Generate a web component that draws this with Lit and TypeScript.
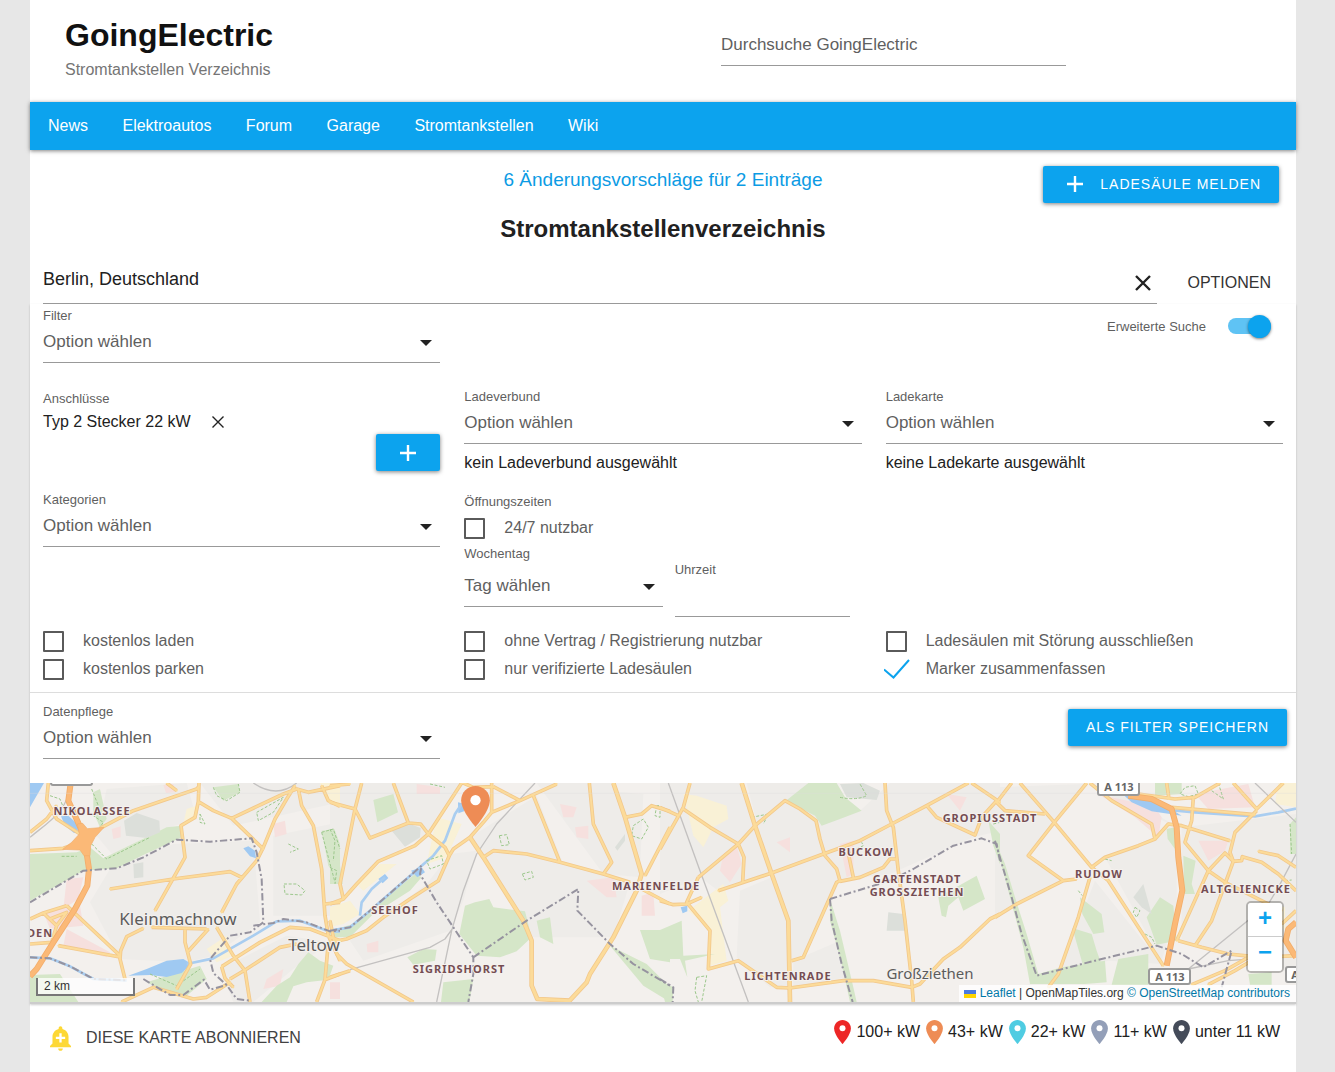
import { LitElement, html, svg, css } from "lit";
import { customElement, property } from "lit/decorators.js";

/* Map geometry. Each sheet has its own origin; three units make one CSS pixel. */
interface Sheet {
  x: number;
  y: number;
  built: string;
  green: string;
  dull: string;
  yellow: string;
  pink: string;
  water: string;
  river: string;
  road: string;
  main: string;
  motorway: string;
  rail: string;
  border: string;
  path: string;
}

const SHEETS: Sheet[] = [
  {
    x: 0, y: -15,
    built: "M270 400L330 300 520 225 760 215 780 460 640 560 560 580 360 570ZM320 60L560 42 590 150 460 190 340 260 290 200ZM820 200L1020 160 1020 440 820 440ZM600 42H1020V100L700 170ZM660 600L860 500 990 520 880 600 760 699H700Z",
    green: "M90 255L230 250 270 235 310 268 500 175 545 170 545 205 430 258 350 298 250 305 90 395ZM965 185L1003 180 1020 225V340L985 290ZM895 585L925 550 960 575 1000 590 985 632 920 640 880 652 860 699H785L830 650 870 625ZM90 618L180 615 235 699H90ZM280 70L300 60 320 150 300 175 280 130ZM640 55L715 45 720 70 670 95ZM440 640L600 590 620 630 560 680 500 670Z",
    dull: "M372 155L410 132 478 155 480 190 440 207 378 200ZM400 285L430 280 430 325 402 328Z",
    yellow: "M960 42H1020V110L980 95ZM620 540L680 500 700 560 650 580ZM560 120L590 110 580 150 550 165Z",
    pink: "M335 180L362 172 362 205 340 210ZM820 165L855 155 860 195 825 205ZM490 48L520 45 525 70 498 72ZM130 430L240 410 250 470 150 480ZM200 480L330 550 320 565 190 530ZM200 330L250 325 235 390 190 420ZM800 630L850 600 840 650 790 660ZM990 640H1020V690H990Z",
    water: "M90 42H132L90 115ZM183 142L205 140 232 165 240 188 222 192 195 170ZM385 620L440 600 500 575 550 570 575 585 545 612 500 624 450 618ZM730 238L745 232 765 245 768 268 750 262Z",
    river: "M560 585L640 568 760 500 830 457 900 455 990 488 1020 487M90 565L150 568 210 592 280 630 380 634",
    road: "M90 190L140 150 170 110M145 42L140 95 170 150 240 195M90 245L190 238 240 220M300 178L400 125 590 60 597 52M500 42L530 65M597 42L595 98 585 145 543 170 555 265 465 425M595 98L640 125 695 148 790 240M695 148L850 75 890 60 925 70 1020 50M885 50L860 90 825 150 790 235 770 275 710 345 665 430M650 475L700 560 735 605 750 699M895 60L905 110 940 170 965 300 975 440 985 500 1020 575M330 360L520 330 690 308 725 325M455 475L620 480M430 478L380 503 362 545 360 570 375 630M200 410L360 560M175 530L360 564M555 480L555 520 572 585 530 660M625 480L562 550M665 593L780 520 870 475 930 480 1020 515M665 593L675 628 700 655M690 630L740 600 840 535 890 525M365 699L460 655 580 690 620 685 690 640M90 450L130 432 200 410M90 525L155 520M130 432L170 470 155 520M150 450L200 430 170 470M950 699L975 632 985 520M975 632L1020 615M975 405L1020 400M965 50L985 95 1020 112",
    main: "",
    motorway: "M212 42L205 95 225 140 250 195 258 240 267 300 262 350 225 420 160 520 110 600 90 622",
    rail: "M90 205C150 155 200 130 215 42M760 42Q830 90 890 42",
    border: "M90 400L250 305 350 298 430 265 530 212 630 218 755 208 770 250 785 330 790 460 750 490 690 500 630 570 640 612 680 648 710 690 750 695M90 565L150 568 210 592 280 630 380 634M430 630L510 678 550 678 612 632 630 662 680 648M760 470L820 462 850 450 920 460 990 487 1020 485",
    path: "M275 225L320 270 450 205M185 262H230M150 80L180 90 200 140M275 60L295 110 280 140 310 160 290 190M640 55L650 80 680 95 720 70 715 45M770 130L850 85 820 130 775 155ZM965 190L1000 180 1020 240M965 190L1005 340M852 345L890 345 915 365 905 378 855 375ZM865 225L895 240 870 250M600 135L615 165 600 160ZM450 615L530 650 600 600",
  },
  {
    x: 990, y: 0,
    built: "M0 27H395L295 180 140 265 40 375 0 390ZM420 190L620 65 700 270 900 325 850 490 600 490 460 250ZM620 27H850L935 310 820 300ZM290 330L360 240 440 230 400 380 360 470 100 560 60 500ZM690 40L940 60 930 290Z",
    green: "M130 78L190 60 204 115 142 145ZM405 395L435 385 478 375 490 400 585 412 605 490 560 532 510 550 440 545 388 480ZM930 468H1020V565L960 555ZM340 625L430 615 418 684H333ZM232 550L280 525 320 527 315 560 250 572ZM0 165L25 240 38 330 0 330ZM840 515L950 570 1020 640V684L940 635ZM70 450L255 300 275 310 240 350 130 420 60 490H0V470ZM620 440L660 430 670 510 630 490Z",
    dull: "M185 170L240 150 272 162 270 190 225 218ZM855 220L885 180 885 200 862 230Z",
    yellow: "M320 130L395 150 350 250 290 270ZM0 400L60 380 90 420 40 450 0 460ZM80 330L150 270 200 270 100 350Z",
    pink: "M935 365L970 355 975 425 935 425ZM735 160L775 155 775 195 740 190ZM690 90L740 100 730 130 700 130ZM110 510L145 500 145 535 112 535ZM260 30L330 40 330 60 260 60ZM770 320L850 310 860 370 830 370Z",
    water: "M384 85L405 90 402 112 385 118ZM145 315L165 300 175 312 158 328ZM243 290L275 280 285 295 262 310Z",
    river: "M395 90L375 120 345 200 310 245 275 275 120 410 60 460 0 470M90 425L95 385 125 345 165 310",
    road: "M0 35L60 30M95 27L75 105 30 330 40 375M0 85L75 105 120 192 235 147 190 27M235 147L272 150 295 180 345 220 358 245M395 27L295 180 255 215 145 262 80 330 40 375 0 390M358 245L370 225 420 190 460 145 485 115 570 80 680 30M485 27V115M490 38L570 80M358 245L325 320 240 375 160 430 110 470 50 495 0 505M460 250L490 230 590 240 690 265 820 300 900 325M610 65L690 265M778 27L790 150 845 265 820 300M885 130L935 120 965 95 1020 112M1020 160L945 305M935 345L1020 390M0 440L20 540 50 570 250 684M0 610L60 590M400 27L430 40 490 38",
    main: "M420 190L460 250 580 440 605 500 605 635 622 675 720 680M850 27L885 130 935 300 920 350 850 490 780 600 770 625 715 684",
    motorway: "",
    rail: "M615 27L500 150 440 240 400 350 365 470 320 684M60 587L300 520 345 495 370 460",
    border: "M0 470L60 460 120 410 275 275 270 300 320 385 430 550 430 600 415 684M430 550L590 440 745 345 742 410 840 510 910 570 1020 635",
    path: "M0 165L15 200 10 260M0 280L20 290 15 330M290 260L335 245 340 270 300 285ZM508 185L530 182 538 212 515 215ZM577 300L605 292 610 310 585 318ZM910 155L940 135 955 160 935 195 905 185ZM980 95L975 125 990 130 990 95ZM300 30L345 40",
  },
  {
    x: 1980, y: 0,
    built: "M0 27H240L330 300 175 350 120 310 0 360ZM260 27L440 27 600 110 690 27H1020V170L940 190 690 300 540 320 430 550 395 560ZM240 350L335 310 385 440 390 640 330 640 230 550ZM400 560L540 500 560 610 400 640Z",
    green: "M445 27H530L555 70 605 110 540 135 485 155 465 125 378 80ZM835 370L950 305 975 375 910 410 895 370 865 395 858 430 845 425ZM0 468L65 440 70 545 165 540 75 560 82 610 60 555H0ZM510 375L540 470 580 640 590 684H570L545 570 510 440ZM985 140L1020 180V270L1000 215ZM0 620L40 640 38 684H15Z",
    dull: "M540 30L610 27 660 50 650 78 560 70ZM685 415L730 420 735 470 680 470Z",
    yellow: "M70 60L110 65 200 95 205 135 160 160 130 220 100 185 85 120ZM85 410L190 330 205 380 180 400 200 560 150 575 155 470Z",
    pink: "M190 240L230 215 245 270 210 325 180 290ZM540 210L580 200 580 300 560 310ZM660 235L700 225 690 250ZM350 205L390 190 390 235ZM860 60L920 70 900 110Z",
    water: "M62 400L82 395 82 412 68 418Z",
    river: "",
    road: "M90 27L70 100 0 225M0 100L55 125M70 105L150 160 235 210 252 250 248 325M115 310L235 210 285 155 375 80 420 105 468 140 480 195 495 245 530 285 540 320 530 325 430 550 395 560M175 350L335 297 490 240 600 200 695 150 800 95 925 27M675 27L680 110 700 160 715 290 735 440 755 620 760 684M800 95L830 130 945 183 965 130 1010 80M935 27L1020 85M540 322L600 310 670 280 690 255 705 255M565 238L580 310M0 380L40 392 80 390 125 370M115 310L80 385 150 470 145 585 235 560 350 640 390 642 550 620 640 620 755 640 780 630 850 555 900 520 990 435 1020 420",
    main: "M245 27L285 155 335 300 385 440 390 684",
    motorway: "",
    rail: "M25 27L120 290 265 684",
    border: "M510 375L690 320 760 285 880 215 965 193 1010 210 1020 260M510 375L515 440 545 570 578 684M0 615L40 640 38 684",
    path: "M110 610L140 605 125 684M110 610L105 650 115 684M275 130L325 120 310 150M1000 150L1020 145M540 70Q590 80 620 65L600 30M565 238L610 215 605 205",
  },
  {
    x: 2985, y: 0,
    built: "M0 40L270 30 100 245 200 320 0 420ZM275 30L400 65 530 150 480 200 330 250 500 560 545 400 545 160ZM560 160L903 120V600L560 500ZM300 320L500 570 340 560 190 600Z",
    green: "M0 200L30 270 60 370 95 480 130 600 200 580 330 560 335 625 270 630H105L85 520ZM255 370L320 420 328 475 295 480 262 420ZM232 462L290 480 305 530 330 600 270 595ZM495 370L535 395 545 500 485 512 455 430ZM370 555L460 540V632H350ZM760 600L830 595V632H765ZM565 245L602 260 590 330 600 360 568 360ZM515 165L540 160V225L518 195ZM480 27H560V60L480 65ZM885 150L903 130V240L885 240Z",
    dull: "M415 370L445 330 470 420 440 400Z",
    yellow: "M850 27H903V100L840 90ZM800 380L870 400V470L800 400Z",
    pink: "M310 60L480 100 500 130 490 190 420 130ZM600 60L760 30 780 100 640 105ZM610 200L700 200 690 230 640 260Z",
    water: "M385 62L470 80 520 100 560 125 470 112 410 85Z",
    river: "M520 108L600 115 780 127 850 115 903 104",
    road: "M75 27L178 145 290 280 340 320 505 575M275 27L178 145 100 245 205 320 245 315M205 320L65 390 0 430M50 27L5 85 30 110 150 120M285 27L350 80 470 150 480 195 430 215 330 250 290 280M480 195L520 150 560 155 705 200M285 310L250 430 190 600 160 640M515 27L522 75M430 60L540 75 600 70 675 27M595 70L590 140 570 205 640 290 690 325 810 385 860 410M530 100L780 122M715 27L785 105 865 27M785 110L720 175 705 235 715 262 690 330 650 440 600 515M545 500L640 290 690 237 715 262 740 260 742 248 800 265 850 300 903 350M790 232L850 245 903 280M550 500L620 520 700 540 800 550 903 545M590 632L690 590 760 550M640 632L720 590 770 560M860 450L903 410",
    main: "",
    motorway: "M400 65L470 75 530 105 545 160 550 250 562 350 540 450 515 575M903 445L880 465 872 500 903 550",
    rail: "M780 27L903 145M903 240L850 340 820 390 580 585M580 585L700 560 903 545",
    border: "M0 200L50 370 80 480 125 605 300 560 485 515 560 540 625 580 710 530 680 640",
    path: "M555 60L570 40 600 35 610 60 580 68ZM650 50L685 75 670 27M885 150L890 240M450 480L470 490 480 510M420 400L435 410 425 430 415 415ZM250 350L262 365M330 255L350 260M870 320L890 318",
  },
];

const SUBURBS: [string, number, number][] = [
  ["NIKOLASSEE", 92, 816],
  ["SEEHOF", 395, 915],
  ["SIGRIDSHORST", 459, 974],
  ["MARIENFELDE", 656, 891],
  ["BUCKOW", 866, 857],
  ["GARTENSTADT", 917, 884],
  ["GROSSZIETHEN", 917, 897],
  ["GROPIUSSTADT", 990, 823],
  ["LICHTENRADE", 788, 981],
  ["RUDOW", 1099, 879],
  ["ALTGLIENICKE", 1246, 894],
  ["DEN", 40, 938],
];

const layer = (key: keyof Sheet, cls: string) =>
  svg`<g class=${cls}>${SHEETS.map(
    (s) => svg`<path transform="translate(${s.x} ${s.y})" d=${s[key] as string}></path>`
  )}</g>`;

const pin = (color: string, cls: string) => html`
  <svg class=${cls} viewBox="5 2 14 20" aria-hidden="true">
    <path fill=${color} d="M12 2C8.13 2 5 5.13 5 9c0 5.25 7 13 7 13s7-7.75 7-13c0-3.87-3.13-7-7-7z"></path>
    <circle cx="12" cy="8.9" r="2.5" fill="#fff"></circle>
  </svg>`;

const plusIcon = html`<svg class="plus" viewBox="0 0 18 18" aria-hidden="true"><path d="M9 1v16M1 9h16"></path></svg>`;

@customElement("city-map")
export class CityMap extends LitElement {
  static styles = css`
    :host { display: block; }
    .map { position: relative; height: 219px; overflow: hidden; border-bottom: 2px solid #ccc; }
    .canvas { display: block; width: 100%; height: 100%; }
    .built { fill: #eeece9; }
    .green { fill: #d5e6c8; }
    .dull { fill: #dcdfda; }
    .yellow { fill: #f9f1d6; }
    .pink { fill: #f6e0de; }
    .water { fill: #9fc9f2; }
    .river, .rail, .casing, .road, .border, .path, .maincase, .main, .mwcase, .mw { fill: none; stroke-linejoin: round; }
    .river { stroke: #a9cdf0; stroke-width: 8; }
    .rail { stroke: #c3c1c0; stroke-width: 4; }
    .path { stroke: #9cc78c; stroke-width: 3; stroke-dasharray: 9 5; }
    .casing { stroke: #f2c88c; stroke-width: 11; stroke-linecap: butt; }
    .road { stroke: #fcdb99; stroke-width: 6; stroke-linecap: round; }
    .maincase { stroke: #f2c88c; stroke-width: 14; }
    .main { stroke: #fcdb99; stroke-width: 9; }
    .mwcase { stroke: #f2ad6b; stroke-width: 18; }
    .mw { stroke: #fbb977; stroke-width: 13; }
    .junction { fill: #fbb977; stroke: #f2ad6b; stroke-width: 2; }
    .border { stroke: #96939f; stroke-width: 6; stroke-dasharray: 22 8 6 8; }
    .suburb, .town, .shield { text-anchor: middle; font-family: "Noto Sans", sans-serif; stroke: #f4f1ee; paint-order: stroke; }
    .suburb { font-size: 11px; font-weight: 700; letter-spacing: 1px; fill: #744d53; stroke-width: 2px; }
    .town { font-size: 17px; fill: #5c5c5c; stroke-width: 2px; }
    .village { font-size: 15px; }
    .plate { fill: #fff; stroke: #999; stroke-width: 2; }
    .shield { font-size: 11px; font-weight: 700; fill: #666; stroke: none; }
    .marker { position: absolute; left: 431px; top: 3px; width: 29px; height: 41px; }
    .scale {
      position: absolute; left: 6px; bottom: 6px; width: 95px; height: 16px;
      border: 2px solid #777; border-top: 0; background: rgba(255, 255, 255, 0.75);
      font-size: 12px; line-height: 16px; text-indent: 6px; color: #333;
    }
    .corner { position: absolute; right: 0; bottom: 0; display: flex; flex-direction: column; align-items: flex-end; gap: 12px; }
    .zoom { display: flex; flex-direction: column; margin-right: 12px; border: 2px solid rgba(0, 0, 0, 0.25); border-radius: 5px; background-clip: padding-box; overflow: hidden; }
    .zoom button {
      width: 34px; height: 34px; border: 0; padding: 0 0 4px; background: #fff; color: #0ca3ee;
      font: bold 24px/30px "Liberation Sans", Arial, sans-serif; cursor: pointer;
    }
    .zoom button:first-child { border-bottom: 1px solid #ccc; }
    .credit {
      display: flex; align-items: center; gap: 4px; height: 17px; padding: 0 6px 0 5px;
      background: rgba(255, 255, 255, 0.8); font-size: 12px; line-height: 17px; color: #333; white-space: nowrap;
    }
    .credit a { color: #0078a8; text-decoration: none; }
    .flag { width: 12px; height: 8px; }
  `;

  render() {
    return html`<div class="map">
      <svg class="canvas" viewBox="30 784 1266 219" preserveAspectRatio="xMidYMid slice" role="img" aria-label="Karte">
        <rect x="30" y="784" width="1266" height="219" fill="#f3f0ed"></rect>
        <g transform="translate(0 775) scale(0.33333)">
          ${layer("built", "built")} ${layer("yellow", "yellow")} ${layer("pink", "pink")}
          ${layer("green", "green")} ${layer("dull", "dull")} ${layer("water", "water")}
          ${layer("river", "river")} ${layer("path", "path")} ${layer("rail", "rail")}
          ${layer("road", "casing")} ${layer("main", "maincase")}
          ${layer("road", "road")} ${layer("main", "main")}
          ${layer("motorway", "mwcase")} ${layer("motorway", "mw")}
          <path class="junction" d="M188 226L215 205 238 180 232 150 248 148 262 164 312 160 285 190 272 215 270 245 252 245 240 228Z"></path>
          ${layer("border", "border")}
          <path d="M90 58H3888" stroke="#dddbd9" stroke-width="1"></path>
        </g>
        ${SUBURBS.map(([name, x, y]) => svg`<text class="suburb" x=${x} y=${y}>${name}</text>`)}
        <text class="town" x="178" y="926">Kleinmachnow</text>
        <text class="town" x="314" y="952">Teltow</text>
        <text class="town village" x="930" y="980">Großziethen</text>
        <rect class="plate" x="51" y="770" width="41" height="16" rx="2"></rect>
        <rect class="plate" x="1098" y="780" width="41" height="16" rx="2"></rect>
        <text class="shield" x="1119" y="792">A 113</text>
        <rect class="plate" x="1149" y="970" width="41" height="15" rx="2"></rect>
        <text class="shield" x="1170" y="982">A 113</text>
        <rect class="plate" x="1286" y="968" width="41" height="15" rx="2"></rect>
        <text class="shield" x="1306" y="980">A 113</text>
      </svg>
      ${pin("#ee8c55", "marker")}
      <div class="scale">2 km</div>
      <div class="corner">
        <div class="zoom">
          <button aria-label="Vergrößern">+</button>
          <button aria-label="Verkleinern">−</button>
        </div>
        <div class="credit">
          <svg class="flag" viewBox="0 0 12 8" aria-hidden="true"><path fill="#4c7be1" d="M0 0h12v4H0z"></path><path fill="#ffd500" d="M0 4h12v4H0z"></path></svg>
          <span><a href="#leaflet">Leaflet</a> | OpenMapTiles.org <a href="#osm">© OpenStreetMap contributors</a></span>
        </div>
      </div>
    </div>`;
  }
}

@customElement("pick-field")
export class PickField extends LitElement {
  @property() label = "";
  @property() value = "Option wählen";
  static styles = css`
    :host { display: block; }
    .field { display: flex; flex-direction: column; position: relative; }
    .label { font-size: 13px; line-height: 16px; color: #5f5f5f; }
    .select {
      appearance: none; width: 100%; height: 39px; margin: 0; padding: 0 32px 4px 0; border: 0; border-bottom: 1px solid #999;
      border-radius: 0; background: transparent; color: #5f5f5f; font: 17px "Liberation Sans", Arial, sans-serif;
    }
    :host([spaced]) .field { gap: 6px; }
    .arrow { position: absolute; right: 8px; bottom: 17px; width: 12px; height: 6px; fill: #222; pointer-events: none; }
  `;
  render() {
    return html`<div class="field">
      <label class="label" for="pick">${this.label}</label>
      <select class="select" id="pick"><option>${this.value}</option></select>
      <svg class="arrow" viewBox="0 0 12 6" aria-hidden="true"><path d="M0 0h12L6 6z"></path></svg>
    </div>`;
  }
}

@customElement("tick-box")
export class TickBox extends LitElement {
  @property() label = "";
  @property({ type: Boolean }) checked = false;
  static styles = css`
    :host { display: block; }
    .row { display: flex; align-items: center; gap: 19px; height: 28px; font-size: 16px; color: #5f5f5f; }
    .box { position: relative; display: flex; }
    .input { appearance: none; width: 21px; height: 21px; margin: 0; border: 2px solid #5a5a5a; border-radius: 1px; background: #fff; }
    .input:checked { border-color: transparent; }
    .check { display: none; position: absolute; left: -2px; top: 0; width: 26px; height: 20px; fill: none; stroke: #0ca3ee; stroke-width: 2; pointer-events: none; }
    .input:checked + .check { display: block; }
  `;
  render() {
    return html`<label class="row">
      <span class="box">
        <input class="input" type="checkbox" .checked=${this.checked} />
        <svg class="check" viewBox="0 0 26 20"><path d="M0 10.5 9.5 18.5 25 1"></path></svg>
      </span>
      ${this.label}
    </label>`;
  }
}

@customElement("app-root")
export class AppRoot extends LitElement {
  static styles = css`
    :host { display: block; min-height: 100vh; background: #e7e7e7; font-family: "Liberation Sans", Arial, sans-serif; color: #212121; }
    * { box-sizing: border-box; }
    button, input { font-family: inherit; }
    .sheet { margin: 0 39px 0 30px; min-height: 100vh; background: #fff; }
    .head { display: grid; grid-template-columns: 691fr 345fr 230fr; height: 102px; }
    .brand { padding: 16px 0 0 35px; }
    .title { margin: 0; font-size: 32px; line-height: 38px; color: #111; }
    .sub { margin: 6px 0 0; font-size: 16px; line-height: 20px; color: #757575; }
    .find { width: 100%; height: 42px; margin-top: 24px; padding: 0; border: 0; border-bottom: 1px solid #999; border-radius: 0; font-size: 17px; outline: 0; }
    .find::placeholder { color: #5f5f5f; opacity: 1; }
    .nav { position: relative; height: 48px; padding-left: 3px; background: #0ca3ee; box-shadow: 0 1px 4px rgba(0, 0, 0, 0.5); line-height: 48px; font-size: 16px; }
    .nav a { padding: 0 15px; color: #fff; text-decoration: none; }
    .intro { display: grid; grid-template-columns: 1fr auto 1fr; padding: 16px 17px 0; }
    .changes { grid-column: 2; font-size: 19px; line-height: 28px; color: #0c9be4; text-decoration: none; }
    .btn {
      display: flex; align-items: center; justify-content: center; gap: 16px; height: 37px; padding: 0 18px; border: 0; border-radius: 2px;
      background: #0ca3ee; color: #fff; font-size: 14px; letter-spacing: 1px; white-space: nowrap;
      box-shadow: 0 1px 4px rgba(0, 0, 0, 0.5); cursor: pointer;
    }
    .report, .save-btn { padding-bottom: 2px; }
    .report { justify-self: end; padding-left: 23px; }
    .plus { width: 18px; height: 18px; fill: none; stroke: #fff; stroke-width: 2.4; }
    .heading { margin: 10px 0 0; text-align: center; font-size: 24px; line-height: 32px; }
    .search { display: flex; gap: 30px; padding: 13px 25px 0 13px; }
    .place { flex: 1; display: flex; height: 46px; border-bottom: 1px solid #999; }
    .place input { flex: 1; min-width: 0; padding: 0 0 2px; border: 0; font-size: 18px; color: #212121; outline: 0; background: transparent; }
    .icon { display: flex; align-items: center; justify-content: center; padding: 0; border: 0; background: transparent; cursor: pointer; }
    .clear { width: 28px; padding-top: 5px; }
    .cross { fill: none; stroke: #222; }
    .cross.big { width: 16px; height: 16px; stroke-width: 2.4; }
    .cross.small { width: 12px; height: 12px; stroke-width: 1.4; }
    .text { padding: 4px 0 0; border: 0; background: transparent; font-size: 16px; color: #333; cursor: pointer; }
    .grid { display: grid; grid-template-columns: repeat(3, minmax(0, 1fr)); column-gap: 24px; padding: 0 13px; }
    .filter { padding-top: 4px; }
    .switch { grid-column: 3; display: flex; align-items: center; justify-content: flex-end; gap: 22px; height: 36px; padding-right: 12px; font-size: 13px; color: #5f5f5f; }
    .toggle { position: relative; display: flex; }
    .toggle input { appearance: none; width: 43px; height: 16px; margin: 0; border-radius: 8px; background: #5fc3f4; }
    .knob { position: absolute; right: 0; top: -3px; width: 23px; height: 23px; border-radius: 50%; background: #0ca3ee; box-shadow: 0 1px 3px rgba(0, 0, 0, 0.5); pointer-events: none; }
    .plugs { padding-top: 26px; }
    .small { font-size: 13px; line-height: 16px; color: #5f5f5f; }
    .connectors { padding-top: 2px; }
    .chip { display: flex; align-items: center; gap: 20px; height: 24px; margin-top: 3px; font-size: 16px; }
    .chip .icon { width: 14px; height: 24px; }
    .add { width: 64px; margin-left: auto; padding: 0; }
    .note { margin: 8px 0 0; font-size: 16px; line-height: 22px; }
    .times { padding-top: 18px; align-items: start; }
    .hours { padding-top: 2px; }
    .all-day { padding: 4px 0; }
    .when { display: grid; grid-template-columns: 1fr 175px; column-gap: 12px; padding-right: 12px; }
    .clock { display: flex; flex-direction: column; padding-top: 16px; }
    .clock input { width: 100%; height: 39px; padding: 0; border: 0; border-bottom: 1px solid #999; font-size: 17px; outline: 0; }
    .ticks { padding-top: 10px; padding-bottom: 9px; }
    .save { padding-top: 11px; padding-bottom: 24px; border-top: 1px solid #ddd; }
    .save-btn { grid-column: 3; justify-self: end; margin: 5px -4px 0 0; }
    .card { box-shadow: 0 1px 2px rgba(0, 0, 0, 0.2); }
    .foot { display: flex; justify-content: space-between; align-items: flex-start; padding: 15px 16px 0 20px; font-size: 16px; }
    .follow { display: flex; align-items: center; gap: 15px; height: 38px; padding: 0; border: 0; background: transparent; font-size: 16px; color: #424242; cursor: pointer; }
    .bell { width: 21px; height: 25px; fill: #fdd835; }
    .legend { display: flex; gap: 6px; margin: 0; padding: 0; list-style: none; }
    .legend li { display: flex; align-items: center; gap: 5px; height: 25px; white-space: nowrap; }
    .dot { width: 17px; height: 24px; }
  `;

  render() {
    const nav = ["News", "Elektroautos", "Forum", "Garage", "Stromtankstellen", "Wiki"];
    const legend = [
      ["100+ kW", "#ed2626"],
      ["43+ kW", "#ee8c55"],
      ["22+ kW", "#4fcce2"],
      ["11+ kW", "#939fb8"],
      ["unter 11 kW", "#444b59"],
    ];
    return html`<div class="sheet">
      <header class="head">
        <div class="brand">
          <h1 class="title">GoingElectric</h1>
          <p class="sub">Stromtankstellen Verzeichnis</p>
        </div>
        <input class="find" type="search" placeholder="Durchsuche GoingElectric" aria-label="Durchsuche GoingElectric" />
      </header>
      <nav class="nav">${nav.map((n) => html`<a href="#${n}">${n}</a> `)}</nav>

      <div class="intro">
        <a class="changes" href="#changes">6 Änderungsvorschläge für 2 Einträge</a>
        <button class="btn report">${plusIcon}LADESÄULE MELDEN</button>
      </div>
      <h2 class="heading">Stromtankstellenverzeichnis</h2>

      <div class="search">
        <div class="place">
          <input type="text" .value=${"Berlin, Deutschland"} aria-label="Ort" />
          <button class="icon clear" aria-label="Löschen">
            <svg class="cross big" viewBox="0 0 16 16"><path d="M1 1l14 14M15 1L1 15"></path></svg>
          </button>
        </div>
        <button class="text">OPTIONEN</button>
      </div>

      <div class="card">
        <div class="grid filter">
          <pick-field label="Filter"></pick-field>
          <label class="switch">Erweiterte Suche
            <span class="toggle"><input type="checkbox" role="switch" checked /><span class="knob"></span></span>
          </label>
        </div>

        <div class="grid plugs">
          <div class="connectors">
            <div class="small">Anschlüsse</div>
            <div class="chip">Typ 2 Stecker 22 kW
              <button class="icon" aria-label="Entfernen">
                <svg class="cross small" viewBox="0 0 12 12"><path d="M.5.5l11 11M11.5.5l-11 11"></path></svg>
              </button>
            </div>
            <button class="btn add" aria-label="Anschluss hinzufügen">${plusIcon}</button>
          </div>
          <div><pick-field label="Ladeverbund"></pick-field><p class="note">kein Ladeverbund ausgewählt</p></div>
          <div><pick-field label="Ladekarte"></pick-field><p class="note">keine Ladekarte ausgewählt</p></div>
        </div>

        <div class="grid times">
          <pick-field label="Kategorien"></pick-field>
          <div class="hours">
            <div class="small">Öffnungszeiten</div>
            <tick-box class="all-day" label="24/7 nutzbar"></tick-box>
            <div class="when">
              <pick-field spaced label="Wochentag" value="Tag wählen"></pick-field>
              <div class="clock"><label class="small" for="clock">Uhrzeit</label><input id="clock" type="text" /></div>
            </div>
          </div>
        </div>

        <div class="grid ticks">
          <div><tick-box label="kostenlos laden"></tick-box><tick-box label="kostenlos parken"></tick-box></div>
          <div><tick-box label="ohne Vertrag / Registrierung nutzbar"></tick-box><tick-box label="nur verifizierte Ladesäulen"></tick-box></div>
          <div><tick-box label="Ladesäulen mit Störung ausschließen"></tick-box><tick-box checked label="Marker zusammenfassen"></tick-box></div>
        </div>

        <div class="grid save">
          <pick-field label="Datenpflege"></pick-field>
          <button class="btn save-btn">ALS FILTER SPEICHERN</button>
        </div>
        <city-map></city-map>
      </div>

      <footer class="foot">
        <button class="follow">
          <svg class="bell" viewBox="3 2 18 21" aria-hidden="true"><path d="M10.01 21.01c0 1.1.89 1.99 1.99 1.99s1.99-.89 1.99-1.99h-3.98zm8.87-4.19V11c0-3.25-2.25-5.97-5.29-6.69v-.72C13.59 2.71 12.88 2 12 2s-1.59.71-1.59 1.59v.72C7.37 5.03 5.12 7.75 5.12 11v5.82L3 18.94V20h18v-1.06l-2.12-2.12zM16 13.01h-3v3h-2v-3H8V11h3V8h2v3h3v2.01z"></path></svg>
          DIESE KARTE ABONNIEREN
        </button>
        <ul class="legend">${legend.map(([t, c]) => html`<li>${pin(c, "dot")}${t}</li>`)}</ul>
      </footer>
    </div>`;
  }
}
